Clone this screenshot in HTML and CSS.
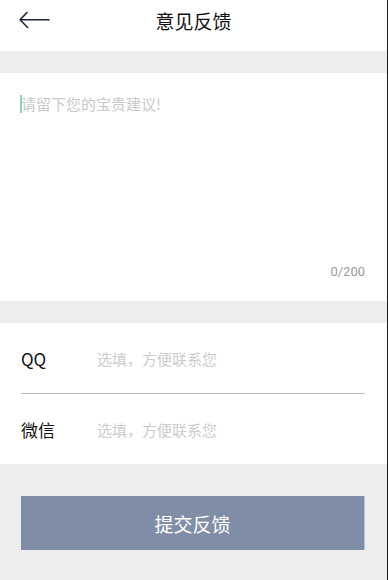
FILE: index.html
```html
<!DOCTYPE html>
<html lang="zh-CN">
<head>
<meta charset="utf-8">
<title>意见反馈</title>
<link rel="stylesheet" href="styles.css">
</head>
<body>
<div class="page">
  <header class="header">
    <div class="back">
      <svg width="32" height="20" viewBox="0 0 32 20">
        <path d="M2 9.8 H31 M9 2.5 L2 9.8 L9.6 17.5" fill="none" stroke="#1c2438" stroke-width="1.6" stroke-linecap="round" stroke-linejoin="round"/>
      </svg>
    </div>
    <h1 class="title">意见反馈</h1>
  </header>
  <div class="gap"></div>
  <section class="feedback">
    <div class="input-line"><span class="caret"></span><span class="placeholder">请留下您的宝贵建议!</span></div>
    <div class="counter">0/200</div>
  </section>
  <div class="gap"></div>
  <section class="contact">
    <div class="row row-first">
      <span class="label">QQ</span>
      <span class="hint">选填，方便联系您</span>
    </div>
    <div class="row">
      <span class="label">微信</span>
      <span class="hint">选填，方便联系您</span>
    </div>
  </section>
  <div class="footer">
    <div class="submit">提交反馈</div>
  </div>
</div>
</body>
</html>
```
FILE: styles.css
```css
html, body {
  margin: 0;
  padding: 0;
  background: #ededed;
}
body {
  font-family: "Noto Sans CJK SC", "Noto Sans", sans-serif;
  width: 388px;
  height: 580px;
  overflow: hidden;
}
.page {
  width: 387px;
  height: 580px;
  border-right: 1px solid #1a1a1f;
  display: flex;
  flex-direction: column;
  background: #ededed;
}
.header {
  position: relative;
  height: 51px;
  background: #fff;
  display: flex;
  justify-content: center;
}
.back {
  position: absolute;
  left: 18px;
  top: 10px;
  height: 20px;
  display: flex;
}
.title {
  margin: 0;
  height: 42px;
  line-height: 42px;
  font-size: 19px;
  font-weight: 400;
  color: #111;
}
.gap {
  height: 22px;
  flex: none;
}
.feedback {
  height: 228px;
  box-sizing: border-box;
  background: #fff;
  padding: 20px 22px 20px 20px;
  display: flex;
  flex-direction: column;
  justify-content: space-between;
}
.input-line {
  display: flex;
  align-items: center;
  height: 22px;
}
.caret {
  width: 2px;
  height: 18px;
  background: #8ed0c5;
  margin-right: -1px;
}
.placeholder {
  font-size: 15px;
  line-height: 22px;
  color: #c9c9c9;
}
.counter {
  text-align: right;
  font-family: Roboto, "Noto Sans", sans-serif;
  font-size: 13px;
  line-height: 18px;
  color: #9a9a9a;
}
.contact {
  background: #fff;
  padding: 0 22px 0 21px;
}
.row {
  height: 70px;
  display: flex;
  align-items: center;
}
.row-first {
  border-bottom: 1px solid #bdbdbd;
}
.label {
  width: 76px;
  font-size: 17px;
  color: #111;
  flex: none;
}
.hint {
  font-size: 15px;
  color: #cccccc;
}
.footer {
  flex: 1;
  padding: 32px 22px 0 21px;
}
.submit {
  height: 54px;
  background: #7f8da7;
  border-right: 1px solid #b9c2d2;
  color: #fff;
  font-size: 19px;
  display: flex;
  align-items: center;
  justify-content: center;
}
```
